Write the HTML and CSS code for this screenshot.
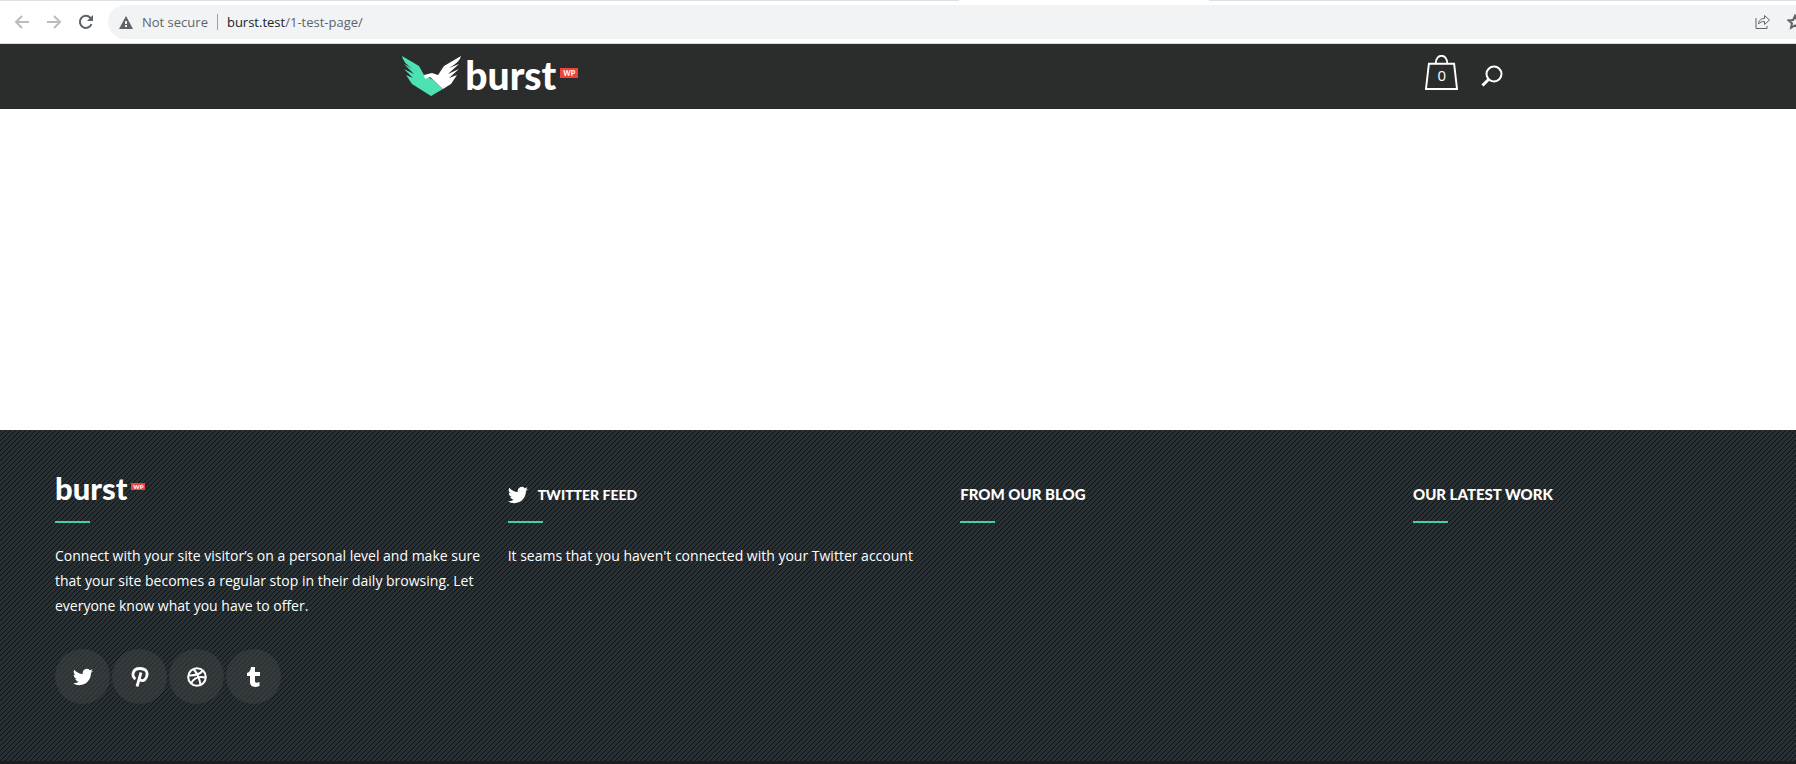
FILE: index.html
```html
<!DOCTYPE html>
<html lang="en">
<head>
    <meta charset="UTF-8">
    <title>burst</title>
    <link rel="stylesheet" href="styles.css">
</head>
<body>
<svg class="symbols" aria-hidden="true">
    <symbol id="twitter" viewBox="0 0 24 24">
        <path d="M23.95 4.57a10 10 0 0 1-2.82.77 4.96 4.96 0 0 0 2.16-2.72c-.95.55-2 .95-3.13 1.18a4.92 4.92 0 0 0-8.38 4.48C7.69 8.1 4.07 6.13 1.64 3.16a4.92 4.92 0 0 0 1.52 6.57 4.9 4.9 0 0 1-2.23-.61v.06a4.92 4.92 0 0 0 3.95 4.83 5 5 0 0 1-2.21.08 4.94 4.94 0 0 0 4.6 3.42A9.87 9.87 0 0 1 0 19.54a14 14 0 0 0 7.55 2.21c9.05 0 14-7.5 14-13.98 0-.21 0-.42-.02-.63a9.94 9.94 0 0 0 2.46-2.55z"/>
    </symbol>
</svg>

<div class="browser">
    <div class="tabs"><span class="tab"></span></div>
    <div class="toolbar">
        <button class="nav" aria-label="Back" disabled>
            <svg width="16" height="16" viewBox="0 0 16 16"><path d="M15 8H2M8 2 2 8l6 6"/></svg>
        </button>
        <button class="nav" aria-label="Forward" disabled>
            <svg width="16" height="16" viewBox="0 0 16 16"><path d="M1 8h13M8 2l6 6-6 6"/></svg>
        </button>
        <button class="nav reload" aria-label="Reload">
            <svg width="16" height="16" viewBox="0 0 16 16"><path d="M13.5 10A6 6 0 1 1 12.3 3.8L14 5.6"/><path class="fill" d="M15 1v6H9z"/></svg>
        </button>
        <div class="address">
            <svg width="14" height="13" viewBox="0 0 14 13"><path fill="#5f6368" d="M7 0l7 13H0z"/><path fill="#f1f3f4" d="M6 5h2v3H6zM6 9h2v2H6z"/></svg>
            <span class="secure">Not secure</span>
            <a class="url" href="#"><b>burst.test</b>/1-test-page/</a>
            <button class="tool" aria-label="Share">
                <svg width="16" height="16" viewBox="0 0 16 16"><path d="M1 4v10.500h11V12M3.500 10c.5-4 2.500-5.500 6-5.500V1.500L14.500 6 9.500 10.500V7.500C7 7.500 5 8 3.500 10z"/></svg>
            </button>
            <button class="tool star" aria-label="Bookmark">
                <svg width="16" height="16" viewBox="0 0 16 16"><path d="M8 1.800l1.900 4.200 4.500.4-3.400 3 1 4.400L8 11.500l-4 2.300 1-4.400-3.400-3 4.500-.4z"/></svg>
            </button>
        </div>
    </div>
</div>

<header class="header">
    <a class="logo" href="#">
        <svg width="59" height="40" viewBox="0 0 59 40">
            <path fill="#4de2b4" d="M0 0l17 10 5 9 4 2 5 3 10 9-12 7-19-12-6-9 7 3-9-9 10 5-10-10 9 5Q1 7 0 0z"/>
            <path fill="#fff" d="M59 0L42 10l-6 9-6-2-8 2 1 4 5-2 13 12 8-5 6-9-8 3 10-9-11 5 11-10-10 4Q58 6 59 0z"/>
        </svg>
        <span class="name">burst</span>
        <span class="tag">WP</span>
    </a>
    <div class="actions">
        <a class="cart" href="#" aria-label="Cart">
            <svg width="33" height="35" viewBox="0 0 34 36"><path d="M4 9h26l3 26H1zM11 9c0-11 12-11 12 0"/></svg>
            <span class="count">0</span>
        </a>
        <button class="search" aria-label="Search">
            <svg width="22" height="22" viewBox="0 0 22 22"><circle cx="13" cy="9" r="7.500"/><path class="handle" d="M7.500 14.500L1.500 20.500"/></svg>
        </button>
    </div>
</header>

<main class="content"></main>

<footer class="footer">
    <div class="columns">
        <section class="column">
            <a class="title logo small" href="#">
                <span class="name">burst</span>
                <span class="tag">WP</span>
            </a>
            <p>Connect with your site visitor’s on a personal level and make sure that your site becomes a regular stop in their daily browsing. Let everyone know what you have to offer.</p>
            <div class="social">
                <a href="#" aria-label="Twitter">
                    <svg width="20" height="20"><use href="#twitter"/></svg>
                </a>
                <a href="#" aria-label="Pinterest">
                    <svg width="18" height="20" viewBox="0 0 18 20"><path fill="none" stroke="#fff" stroke-width="2.800" d="M4.500 12C.5 9.500 1 1.500 9 1.500c6 0 7.500 3.500 7 6.500-.6 4.500-3.500 6-5.500 5.500-1.600-.4-2.500-1.500-2.500-1.500M10 5.500L6 19.500"/></svg>
                </a>
                <a href="#" aria-label="Dribbble">
                    <svg width="20" height="20" viewBox="0 0 20 20"><g fill="none" stroke="#fff" stroke-width="2"><circle cx="10" cy="10" r="8.800"/><path d="M6.500 2C10 6 12.500 11 13.500 18M1.500 8.500c6 .2 11-.8 14.500-5M4 16.500C7 10.500 12 9 18.500 10.500"/></g></svg>
                </a>
                <a href="#" aria-label="Tumblr">
                    <svg width="14" height="20" viewBox="0 0 14 20"><path d="M4 0h4v5h5v4H8v5c0 2.200 2 2 4.500 1v4C7 21 3 19.500 3 15.500V9H0V6c2.500-.8 3.700-2.500 4-6z"/></svg>
                </a>
            </div>
        </section>
        <section class="column">
            <h5 class="title feed"><svg width="20" height="20"><use href="#twitter"/></svg>TWITTER FEED</h5>
            <p>It seams that you haven't connected with your Twitter account</p>
        </section>
        <section class="column">
            <h5 class="title">FROM OUR BLOG</h5>
        </section>
        <section class="column">
            <h5 class="title">OUR LATEST WORK</h5>
        </section>
    </div>
</footer>
</body>
</html>
```

FILE: styles.css
```css
* {
    box-sizing: border-box;
}

body {
    margin: 0;
    min-height: 100vh;
    display: flex;
    flex-direction: column;
    overflow: hidden;
    background: #fff;
    font-family: "Open Sans", "Noto Sans", sans-serif;
    font-size: 14px;
    line-height: 25px;
}

a {
    color: inherit;
    text-decoration: none;
}

button {
    padding: 0;
    border: 0;
    background: none;
}

svg {
    display: block;
    flex-shrink: 0;
}

.symbols {
    position: absolute;
    width: 0;
    height: 0;
}

/* browser bar */
.browser {
    border-bottom: 1px solid #dadce0;
}

.tabs {
    height: 1px;
    padding-left: 53.4%;
    background: #dee1e6;
}

.tab {
    display: block;
    width: 250px;
    height: 1px;
    background: #fff;
}

.toolbar {
    display: flex;
    align-items: center;
    gap: 16px;
    padding: 4px 0 4px 14px;
}

.nav svg,
.tool svg {
    fill: none;
    stroke: #5f6368;
    stroke-width: 2;
}

.nav:disabled svg {
    stroke: #babcbe;
}

.nav .fill {
    fill: #5f6368;
    stroke: none;
}

.reload {
    width: 14px;
}

.tool svg {
    stroke-width: 1;
}

.star svg {
    stroke-width: 2;
}

.address {
    flex: 1;
    display: flex;
    align-items: center;
    height: 34px;
    margin-right: -7px;
    padding-left: 11px;
    border-radius: 17px 0 0 17px;
    background: #f1f3f4;
    color: #5f6368;
    font-size: 13px;
    line-height: 16px;
}

.secure {
    margin: 0 9px;
    padding-right: 9px;
    border-right: 1px solid #9aa0a6;
}

.url {
    margin-right: auto;
}

.url b {
    color: #202124;
    font-weight: 400;
}

.tool {
    margin-right: 16px;
}

.star {
    margin-right: 0;
}

/* header */
.header {
    display: flex;
    justify-content: space-between;
    align-items: center;
    height: 65px;
    padding: 0 16.3% 2px 22.4%;
    background: #2b2c2c;
}

.logo {
    display: flex;
    color: #fff;
    font-family: Lato, sans-serif;
}

.name {
    margin: 0 4px;
    font-size: 39px;
    font-weight: 900;
    line-height: 38px;
}

.tag {
    align-self: flex-start;
    margin-top: 12px;
    padding: 0 3px;
    background: #f0423e;
    font-size: 7px;
    font-weight: 900;
    line-height: 10px;
}

.actions {
    display: flex;
    align-items: center;
    gap: 23px;
}

.cart {
    position: relative;
    padding-bottom: 6px;
}

.cart svg,
.search svg {
    fill: none;
    stroke: #fff;
    stroke-width: 2;
}

.search .handle {
    stroke-width: 3;
}

.count {
    position: absolute;
    top: 8px;
    left: 0;
    width: 100%;
    color: #fff;
    font-size: 15px;
    text-align: center;
}

.content {
    height: 321px;
}

/* footer */
.footer {
    flex: 1;
    padding: 43px 0 0 55px;
    border-bottom: 3px solid #1c1e20;
    background: #283033 linear-gradient(135deg, transparent 5%, #0d1215 5%, #0d1215 15%, transparent 15%, transparent 55%, #0d1215 55%, #0d1215 65%, transparent 65%) 0 0 / 5px 5px;
    color: #fff;
}

.columns {
    display: grid;
    grid-template-columns: repeat(4, 26%);
}

.column {
    padding-right: 26px;
}

.title {
    display: flex;
    align-items: center;
    height: 50px;
    margin: 0 0 20px;
    padding-bottom: 7px;
    background: linear-gradient(#45cfa6, #45cfa6) left bottom / 35px 2px no-repeat;
    font-family: Lato, sans-serif;
    font-size: 15px;
    font-weight: 900;
}

.feed {
    font-size: 14px;
}

.feed svg {
    margin-right: 10px;
}

.column p {
    margin: 0;
}

.small {
    align-items: flex-start;
}

.small .name {
    margin-left: 0;
    font-size: 31px;
    line-height: 30px;
}

.small .tag {
    margin-top: 10px;
    padding: 0 2px;
    font-size: 6px;
    line-height: 7px;
}

.social {
    display: flex;
    gap: 2px;
    margin-top: 31px;
}

.social a {
    display: flex;
    align-items: center;
    justify-content: center;
    width: 55px;
    height: 55px;
    border-radius: 50%;
    background: rgba(66, 68, 70, .5);
}

.social svg,
.feed svg {
    fill: #fff;
}
```
